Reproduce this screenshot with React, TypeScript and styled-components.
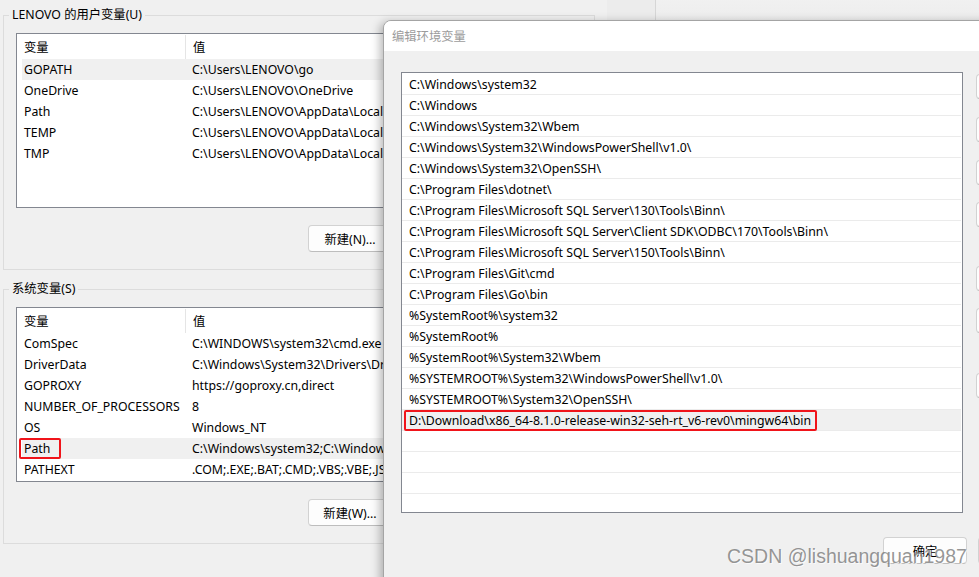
import React from 'react';
import styled, { createGlobalStyle } from 'styled-components';

const GlobalStyle = createGlobalStyle`
  html, body {
    margin: 0;
    padding: 0;
  }
  body {
    background: #ececec;
    font-family: "Noto Sans", "Noto Sans CJK SC", sans-serif;
    font-size: 12.3px;
    color: #000;
  }
`;

const Desktop = styled.div`
  position: relative;
  width: 979px;
  height: 577px;
  overflow: hidden;
  background: #ececec;
`;

// window behind, top right
const BackWindow = styled.div`
  position: absolute;
  left: 655px;
  top: -40px;
  width: 340px;
  height: 60px;
  background: linear-gradient(#f7f7f7, #ededed);
  border-left: 1px solid #d6d6d6;
  border-bottom: 1px solid #8e8e8e;
`;

const EnvWindow = styled.div`
  position: absolute;
  left: 0;
  top: 0;
  width: 607px;
  height: 577px;
  box-sizing: border-box;
  padding: 7px 0 0 3px;
  background: #f0f0f0;
`;

const Group = styled.fieldset<{ $gap?: number }>`
  width: 592px;
  box-sizing: border-box;
  margin: ${p => p.$gap || 0}px 0 0;
  padding: 10px 12px 17px;
  border: 1px solid #dcdcdc;
  min-inline-size: 0;
`;

const Legend = styled.legend`
  margin-left: -7px;
  padding: 0 3px;
  line-height: 16px;
  font-size: 12.3px;
`;

const VarList = styled.div`
  height: 175px;
  box-sizing: border-box;
  border: 1px solid #838790;
  background: #fff;
  overflow: hidden;
`;

const VarHeader = styled.div`
  display: grid;
  grid-template-columns: 169px 1fr;
  height: 25px;
`;

const HeadCell = styled.div<{ $sep?: boolean }>`
  display: flex;
  align-items: center;
  box-sizing: border-box;
  padding-left: 7px;
  margin-top: 1px;
  border-right: ${p => (p.$sep ? '1px solid #e5e5e5' : 'none')};
`;

const VarRow = styled.div<{ $selected?: boolean }>`
  display: grid;
  grid-template-columns: 163px 1fr;
  height: 21px;
  margin: 0 5px;
  align-items: center;
  background: ${p => (p.$selected ? '#f0f0f0' : 'transparent')};
  white-space: nowrap;
`;

const NameCell = styled.div`
  position: relative;
  padding-left: 2px;
`;

const ValueCell = styled.div`
  padding-left: 7px;
  overflow: hidden;
`;

const RedMark = styled.span`
  position: relative;
  &::after {
    content: '';
    position: absolute;
    left: -5px;
    right: -6px;
    top: -2px;
    bottom: -2px;
    border: 2px solid #f0141a;
    border-radius: 2px;
  }
`;

const NameMark = styled(RedMark)`
  &::after {
    right: -11px;
  }
`;

const ButtonRow = styled.div`
  display: flex;
  justify-content: flex-end;
  gap: 11px;
  margin-top: 17px;
`;

const WinButton = styled.div<{ $top?: number }>`
  width: 84px;
  height: 27px;
  flex-shrink: 0;
  box-sizing: border-box;
  margin-top: ${p => p.$top || 0}px;
  display: flex;
  align-items: center;
  justify-content: center;
  background: #fdfdfd;
  border: 1px solid #d2d2d2;
  border-bottom-color: #bdbdbd;
  border-radius: 4px;
  white-space: nowrap;
`;

const SideButton = styled(WinButton)`
  width: 90px;
  height: 25px;
`;

const Dialog = styled.div`
  position: absolute;
  left: 383px;
  top: 20px;
  width: 700px;
  height: 600px;
  box-sizing: border-box;
  display: flex;
  flex-direction: column;
  background: #f0f0f0;
  border: 1px solid #a4a4a4;
  border-radius: 8px 8px 0 0;
  box-shadow: -3px 2px 10px rgba(0, 0, 0, 0.28);
  overflow: hidden;
`;

const TitleBar = styled.div`
  height: 30px;
  flex-shrink: 0;
  display: flex;
  align-items: center;
  padding-left: 8px;
  background: #fff;
  color: #9c9c9c;
`;

const DialogBody = styled.div`
  display: flex;
  padding: 21px 0 0 17px;
`;

const PathList = styled.div`
  width: 562px;
  height: 441px;
  box-sizing: border-box;
  padding-top: 1px;
  border: 1px solid #838790;
  background: #fff;
  overflow: hidden;
`;

const PathRow = styled.div<{ $selected?: boolean }>`
  height: 21px;
  box-sizing: border-box;
  display: flex;
  align-items: center;
  padding-left: 7px;
  margin-right: 1px;
  border-bottom: 1px solid #ebebeb;
  background: ${p => (p.$selected ? '#f0f0f0' : '#fff')};
  white-space: nowrap;
`;

const SideColumn = styled.div`
  display: flex;
  flex-direction: column;
  margin-left: 13px;
  padding-top: 2px;
`;

const Footer = styled.div`
  display: flex;
  justify-content: flex-end;
  gap: 11px;
  margin-top: 24px;
  padding-right: 20px;
`;

const Watermark = styled.div`
  position: absolute;
  left: 727px;
  top: 546px;
  font-family: "Liberation Sans", Arial, sans-serif;
  font-size: 19.5px;
  line-height: 20px;
  color: rgba(110, 110, 110, 0.72);
  text-shadow: 1px 1px 0 rgba(255, 255, 255, 0.7);
  white-space: nowrap;
`;

const userVars = [
  ['GOPATH', 'C:\\Users\\LENOVO\\go'],
  ['OneDrive', 'C:\\Users\\LENOVO\\OneDrive'],
  ['Path', 'C:\\Users\\LENOVO\\AppData\\Local\\Microsoft\\WindowsApps;'],
  ['TEMP', 'C:\\Users\\LENOVO\\AppData\\Local\\Temp'],
  ['TMP', 'C:\\Users\\LENOVO\\AppData\\Local\\Temp'],
];

const systemVars = [
  ['ComSpec', 'C:\\WINDOWS\\system32\\cmd.exe'],
  ['DriverData', 'C:\\Windows\\System32\\Drivers\\DriverData'],
  ['GOPROXY', 'https://goproxy.cn,direct'],
  ['NUMBER_OF_PROCESSORS', '8'],
  ['OS', 'Windows_NT'],
  ['Path', 'C:\\Windows\\system32;C:\\Windows;C:\\Windows\\System32\\Wbem;'],
  ['PATHEXT', '.COM;.EXE;.BAT;.CMD;.VBS;.VBE;.JS;.JSE;.WSF;.WSH;.MSC'],
];

const paths = [
  'C:\\Windows\\system32',
  'C:\\Windows',
  'C:\\Windows\\System32\\Wbem',
  'C:\\Windows\\System32\\WindowsPowerShell\\v1.0\\',
  'C:\\Windows\\System32\\OpenSSH\\',
  'C:\\Program Files\\dotnet\\',
  'C:\\Program Files\\Microsoft SQL Server\\130\\Tools\\Binn\\',
  'C:\\Program Files\\Microsoft SQL Server\\Client SDK\\ODBC\\170\\Tools\\Binn\\',
  'C:\\Program Files\\Microsoft SQL Server\\150\\Tools\\Binn\\',
  'C:\\Program Files\\Git\\cmd',
  'C:\\Program Files\\Go\\bin',
  '%SystemRoot%\\system32',
  '%SystemRoot%',
  '%SystemRoot%\\System32\\Wbem',
  '%SYSTEMROOT%\\System32\\WindowsPowerShell\\v1.0\\',
  '%SYSTEMROOT%\\System32\\OpenSSH\\',
  'D:\\Download\\x86_64-8.1.0-release-win32-seh-rt_v6-rev0\\mingw64\\bin',
  '',
  '',
  '',
  '',
];

const sideButtons: [string, number][] = [
  ['新建(N)', 0],
  ['编辑(E)', 18],
  ['浏览(B)...', 18],
  ['删除(D)', 17],
  ['上移(U)', 39],
  ['下移(O)', 17],
  ['编辑文本(T)...', 40],
];

interface VarTableProps {
  rows: string[][];
  selected: number;
  marked?: number;
}

const VarTable: React.FC<VarTableProps> = ({ rows, selected, marked }) => (
  <VarList>
    <VarHeader>
      <HeadCell $sep>变量</HeadCell>
      <HeadCell>值</HeadCell>
    </VarHeader>
    {rows.map(([name, value], i) => (
      <VarRow key={name} $selected={i === selected}>
        <NameCell>{i === marked ? <NameMark>{name}</NameMark> : name}</NameCell>
        <ValueCell>{value}</ValueCell>
      </VarRow>
    ))}
  </VarList>
);

const App: React.FC = () => {
  const selectedPath = 16;
  return (
    <Desktop>
      <GlobalStyle />
      <BackWindow />
      <EnvWindow>
        <Group>
          <Legend>LENOVO 的用户变量(U)</Legend>
          <VarTable rows={userVars} selected={0} />
          <ButtonRow>
            <WinButton>新建(N)...</WinButton>
            <WinButton>编辑(E)...</WinButton>
            <WinButton>删除(D)</WinButton>
          </ButtonRow>
        </Group>
        <Group $gap={11}>
          <Legend>系统变量(S)</Legend>
          <VarTable rows={systemVars} selected={5} marked={5} />
          <ButtonRow>
            <WinButton>新建(W)...</WinButton>
            <WinButton>编辑(I)...</WinButton>
            <WinButton>删除(L)</WinButton>
          </ButtonRow>
        </Group>
      </EnvWindow>
      <Dialog>
        <TitleBar>编辑环境变量</TitleBar>
        <DialogBody>
          <PathList>
            {paths.map((p, i) => (
              <PathRow key={i} $selected={i === selectedPath}>
                {i === selectedPath ? <RedMark>{p}</RedMark> : p}
              </PathRow>
            ))}
          </PathList>
          <SideColumn>
            {sideButtons.map(([label, top]) => (
              <SideButton key={label} $top={top}>{label}</SideButton>
            ))}
          </SideColumn>
        </DialogBody>
        <Footer>
          <WinButton>确定</WinButton>
          <WinButton>取消</WinButton>
        </Footer>
      </Dialog>
      <Watermark>CSDN @lishuangquan1987</Watermark>
    </Desktop>
  );
};

export default App;
